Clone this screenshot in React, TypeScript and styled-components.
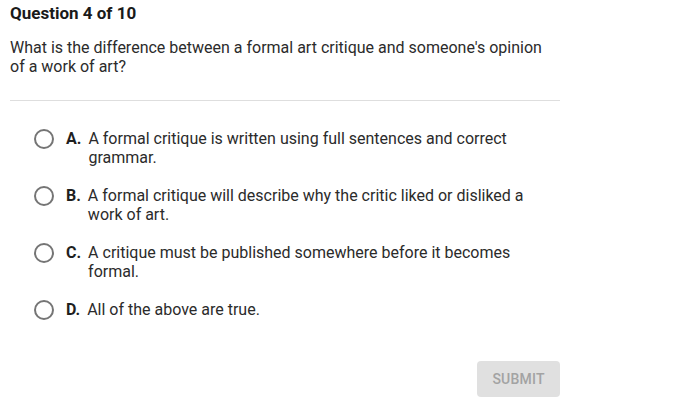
import React, { useState } from 'react';
import styled, { createGlobalStyle } from 'styled-components';

const GlobalStyle = createGlobalStyle`
  body {
    margin: 0;
    background: #ffffff;
    font-family: Roboto, "Liberation Sans", sans-serif;
    color: #262626;
  }
`;

const Page = styled.div`
  width: 550px;
  padding: 3px 10px 0 10px;
`;

const Title = styled.h2`
  margin: 0;
  font-size: 17px;
  line-height: 20px;
  font-weight: 700;
  color: #1a1a1a;
`;

const Prompt = styled.p`
  margin: 15px 10px 0 0;
  font-size: 16px;
  line-height: 19px;
  color: #2b2b2b;
`;

const Divider = styled.hr`
  margin: 24px 0 0 0;
  border: none;
  border-top: 1px solid #dedede;
`;

const Options = styled.div`
  display: flex;
  flex-direction: column;
  gap: 19px;
  padding: 28px 10px 0 24px;
`;

const Option = styled.label`
  display: flex;
  align-items: flex-start;
  cursor: pointer;
  font-size: 16px;
  line-height: 19px;
  color: #2b2b2b;
`;

const Radio = styled.span<{ $checked: boolean }>`
  flex: none;
  box-sizing: border-box;
  width: 20px;
  height: 20px;
  margin-right: 12px;
  border-radius: 50%;
  border: 2px solid #757575;
  display: flex;
  align-items: center;
  justify-content: center;

  &::after {
    content: '';
    width: 10px;
    height: 10px;
    border-radius: 50%;
    background: ${(p) => (p.$checked ? '#1565c0' : 'transparent')};
  }
`;

const Letter = styled.span`
  flex: none;
  font-weight: 700;
  margin-right: 7px;
  color: #1f1f1f;
`;

const Footer = styled.div`
  display: flex;
  justify-content: flex-end;
  margin-top: 41px;
`;

const SubmitButton = styled.button`
  width: 83px;
  height: 36px;
  border: none;
  border-radius: 4px;
  background: #e0e0e0;
  color: #a3a3a3;
  font-family: Roboto, "Liberation Sans", sans-serif;
  font-size: 14px;
  font-weight: 500;
  letter-spacing: 0.2px;
  text-transform: uppercase;
`;

const answers = [
  { key: 'A', text: 'A formal critique is written using full sentences and correct grammar.' },
  { key: 'B', text: 'A formal critique will describe why the critic liked or disliked a work of art.' },
  { key: 'C', text: 'A critique must be published somewhere before it becomes formal.' },
  { key: 'D', text: 'All of the above are true.' },
];

export default function App() {
  const [picked, setPicked] = useState<string | null>(null);

  return (
    <>
      <GlobalStyle />
      <Page>
        <Title>Question 4 of 10</Title>
        <Prompt>
          What is the difference between a formal art critique and someone's opinion of a work of art?
        </Prompt>
        <Divider />
        <Options>
          {answers.map((a) => (
            <Option key={a.key} onClick={() => setPicked(a.key)}>
              <Radio $checked={picked === a.key} />
              <Letter>{a.key}.</Letter>
              <span>{a.text}</span>
            </Option>
          ))}
        </Options>
        <Footer>
          <SubmitButton disabled={!picked}>Submit</SubmitButton>
        </Footer>
      </Page>
    </>
  );
}
